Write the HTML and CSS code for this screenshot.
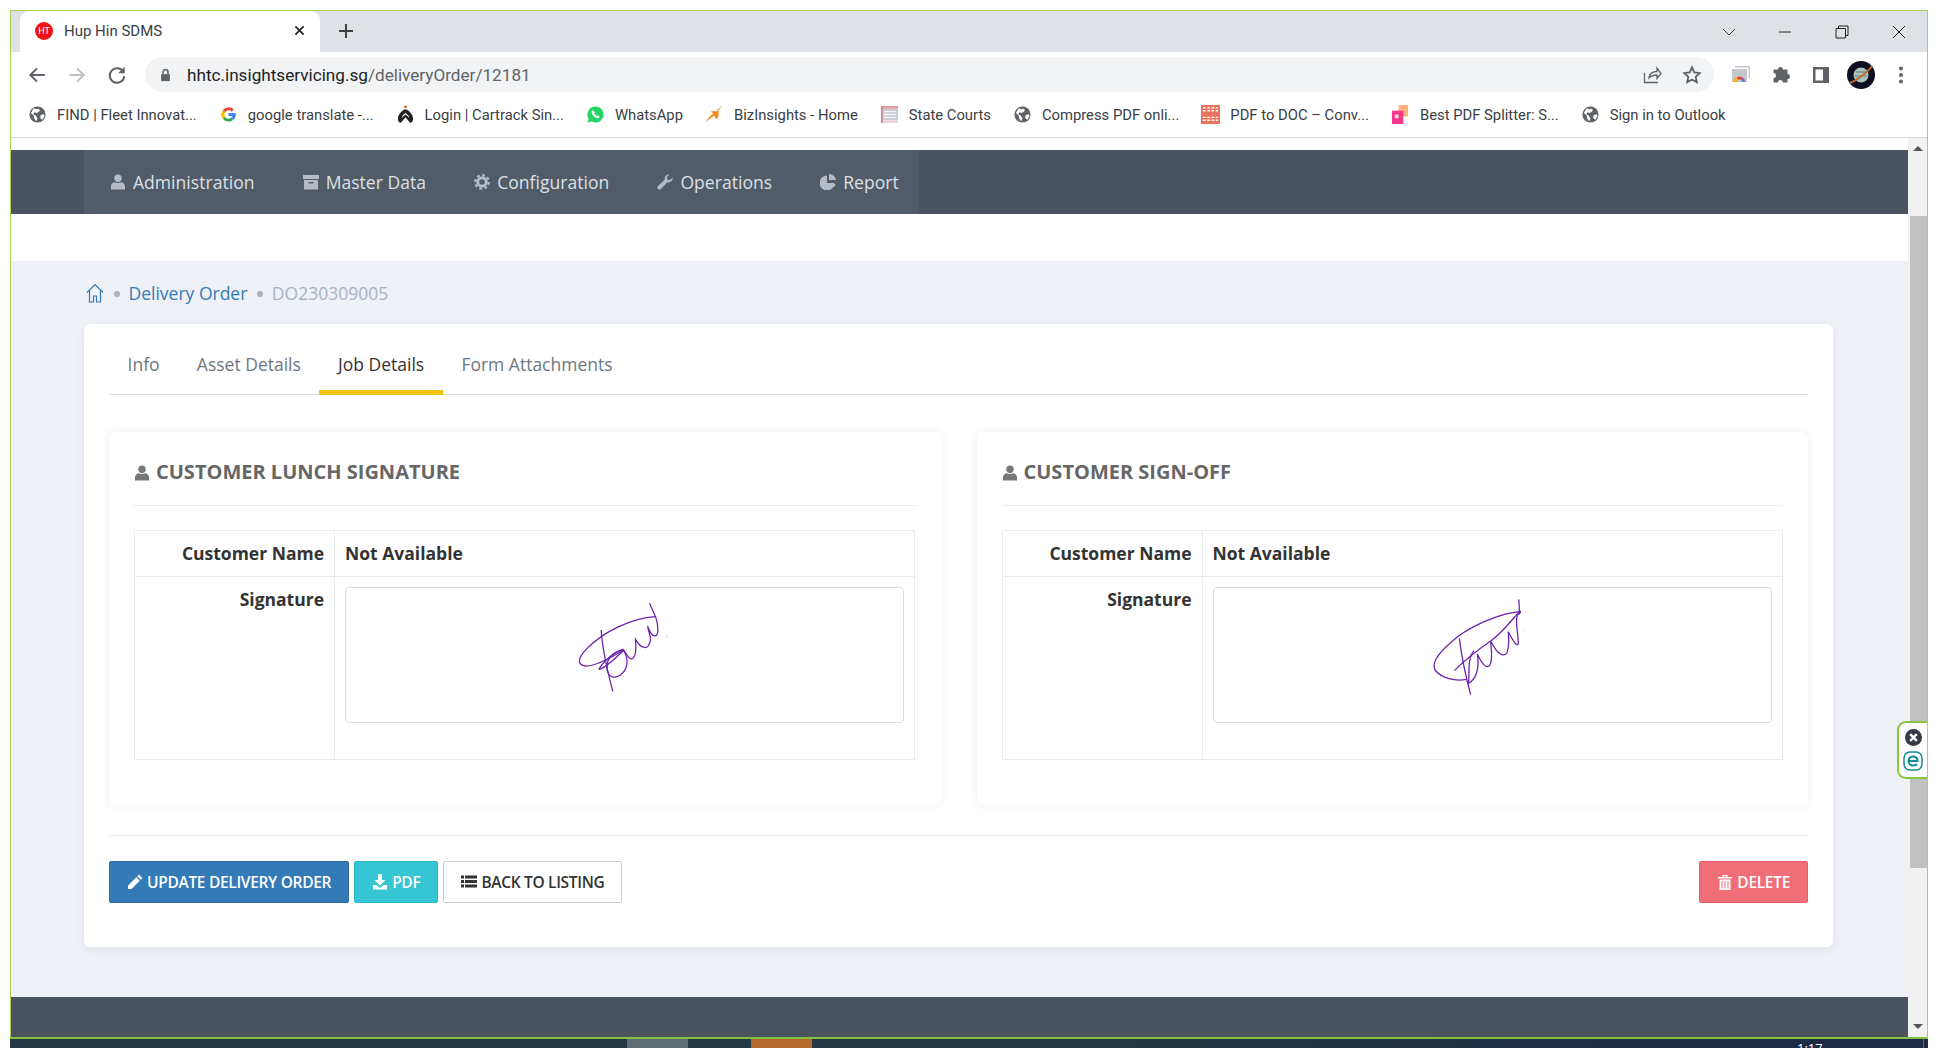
FILE: index.html
```html
<!DOCTYPE html>
<html lang="en">
<head>
    <meta charset="UTF-8">
    <meta name="viewport" content="width=device-width, initial-scale=1.0">
    <title>Hup Hin SDMS</title>
    <link rel="stylesheet" href="styles.css">
</head>
<body>
    <div class="window">
        <div class="tabstrip">
            <div class="tab">
                <span class="favicon">HT</span>
                <span class="tab-title">Hup Hin SDMS</span>
                <svg class="tab-close" viewBox="0 0 12 12"><path d="M1.500 1.500l9 9M10.500 1.500l-9 9"/></svg>
            </div>
            <svg class="new-tab" viewBox="0 0 14 14"><path d="M7 0v14M0 7h14"/></svg>
            <div class="strip-right">
                <svg class="win-chevron" viewBox="0 0 14 8"><path d="M1 1l6 6 6-6"/></svg>
                <span class="win-btn"><svg viewBox="0 0 14 14"><path d="M1 7h12"/></svg></span>
                <span class="win-btn"><svg viewBox="0 0 14 14"><path d="M1 3.500h9.500v9.500h-9.500zM3.500 3.500v-2.500h9.500v9.500h-2.500"/></svg></span>
                <span class="win-btn"><svg viewBox="0 0 14 14"><path d="M1 1l12 12M13 1l-12 12"/></svg></span>
            </div>
        </div>

        <div class="toolbar">
            <span class="tool"><svg viewBox="0 0 18 18"><path class="line" d="M16 9H3M9 3L3 9l6 6"/></svg></span>
            <span class="tool tool-off"><svg viewBox="0 0 18 18"><path class="line" d="M2 9h13M9 3l6 6-6 6"/></svg></span>
            <span class="tool"><svg viewBox="0 0 18 18"><path class="line" d="M14.500 6A6.500 6.500 0 1 0 15.500 10"/><path class="solid" d="M16 1.500v6h-6z"/></svg></span>
            <div class="omnibox">
                <svg class="lock" viewBox="0 0 12 16"><path class="solid" d="M1 7h10v8H1z"/><path class="line" d="M3.200 7V4.500a2.800 2.800 0 0 1 5.600 0V7"/></svg>
                <span class="url">hhtc.insightservicing.sg<span class="url-path">/deliveryOrder/12181</span></span>
                <span class="tool"><svg viewBox="0 0 20 20"><path class="thin" d="M2.500 8v9.500h13.500M7 13c.5-4 3.500-6.500 8-6.500V3l4 5.500-4 5V10c-3.500 0-6 1-8 3z"/></svg></span>
                <span class="tool"><svg viewBox="0 0 20 20"><path class="line" d="M10 2.500l2.300 5 5.400.6-4 3.700 1.100 5.400-4.800-2.700-4.800 2.700 1.100-5.400-4-3.700 5.400-.6z"/></svg></span>
            </div>
            <div class="tools-right">
                <span class="tool"><svg viewBox="0 0 20 20"><path class="grey-fill" d="M4 1h15v12h-1.500V2.500H4zM1 4h15v13H1z"/><path d="M3 17a5.500 5.500 0 0 1 11 0h-3a2.500 2.500 0 0 0-5 0z" fill="#ea4335"/><path d="M3 17a5.500 5.500 0 0 1 3-4.900l1.200 2.700A2.500 2.500 0 0 0 6 17z" fill="#fbbc05"/><path d="M11.500 12.600A5.500 5.500 0 0 1 14 17h-3z" fill="#4285f4"/></svg></span>
                <span class="tool"><svg viewBox="0 0 20 20"><path class="solid" d="M2 6h4.500a2.500 2.500 0 0 1 5 0H16v4.500a2.500 2.500 0 0 1 0 5V19h-4.500a2.500 2.500 0 0 0-5 0H2v-4.500a2.500 2.500 0 0 0 0-5z" transform="translate(0.500 -1.500)"/></svg></span>
                <span class="tool"><svg viewBox="0 0 20 20"><path class="solid" fill-rule="evenodd" d="M2 2h16v16H2zM4.500 4.500v11h7.500v-11z"/></svg></span>
                <span class="tool"><svg class="avatar" viewBox="0 0 28 28"><circle cx="14" cy="14" r="14" fill="#0e0e22"/><circle cx="14" cy="14" r="7.500" fill="#a9c3b8"/><path d="M9 11h10M8 15h12" stroke="#5f7d84"/><path d="M3 22C9 20 21 11 25 5" stroke="#c5682f" stroke-width="2" fill="none"/></svg></span>
                <span class="tool"><svg viewBox="0 0 20 20"><circle class="solid" cx="10" cy="3.500" r="2"/><circle class="solid" cx="10" cy="10" r="2"/><circle class="solid" cx="10" cy="16.500" r="2"/></svg></span>
            </div>
        </div>

        <div class="bookmarks">
            <a class="bookmark"><svg viewBox="0 0 20 20"><use href="#globe"/></svg>FIND | Fleet Innovat...</a>
            <a class="bookmark"><svg viewBox="0 0 20 20"><path d="M15.500 4.500A7.500 7.500 0 0 0 4 5.500l2.500 2A4.500 4.500 0 0 1 13.500 7z" fill="#ea4335"/><path d="M4 5.500a7.500 7.500 0 0 0 0 9l2.500-2a4.500 4.500 0 0 1 0-5z" fill="#fbbc05"/><path d="M4 14.500a7.500 7.500 0 0 0 11 1l-2.300-2a4.500 4.500 0 0 1-6.200-1z" fill="#34a853"/><path d="M15.500 15.500A7.500 7.500 0 0 0 17.500 8.500H10v3h4.300a4 4 0 0 1-1.600 2z" fill="#4285f4"/></svg>google translate -...</a>
            <a class="bookmark"><svg viewBox="0 0 20 20"><circle cx="10" cy="2" r="1.500" fill="#e8632b"/><path d="M10 4.500c-4 1-8 6-8 10 0 3 2 4.500 3.500 4L10 13l4.500 5.500c1.500.5 3.500-1 3.500-4 0-4-4-9-8-10z" fill="#222"/><path d="M10 8.500c-2 1-3.500 3-4 5l4-3.500 4 3.500c-.5-2-2-4-4-5z" fill="#fff"/></svg>Login | Cartrack Sin...</a>
            <a class="bookmark"><svg viewBox="0 0 20 20"><path d="M10 1.500a8.500 8.500 0 0 0-7.300 12.800L1.500 18.500l4.300-1.100A8.500 8.500 0 1 0 10 1.500z" fill="#25d366"/><path d="M7 5.500c-2 1.500-1 4.500 1.500 6.500s5 2.500 6 .5l-2-1.800-1.300.8c-1-.5-2-1.500-2.500-2.700l.8-1.200z" fill="#fff"/></svg>WhatsApp</a>
            <a class="bookmark"><svg viewBox="0 0 20 20"><path d="M18 1c-3 2-5 4-6 6-1-1-3-1-6 0l3 2c-3 2-6 5-8 9 3-3 6-5 9-7 0 2 1 3 3 4 1-3 2-6 1-9 1-2 3-3 4-5z" fill="#f28a1e"/></svg>BizInsights - Home</a>
            <a class="bookmark"><svg viewBox="0 0 20 20"><path d="M2 1h17v3H2z" fill="#e39aa5"/><path d="M2 4h17v12H2z" fill="#c9ced6"/><path d="M4 7h13M4 10h13M4 13h13" stroke="#fff"/><path d="M1 16h18v3H1z" fill="#e8d6da"/><path d="M1 1h2v18H1z" fill="#d98a97"/></svg>State Courts</a>
            <a class="bookmark"><svg viewBox="0 0 20 20"><use href="#globe"/></svg>Compress PDF onli...</a>
            <a class="bookmark"><svg viewBox="0 0 20 20"><path d="M0 0h20v20H0z" fill="#e8735f"/><path d="M2 3h16M2 6h16M2 13h16M2 16h16" stroke="#fff" stroke-width="1.500" stroke-dasharray="3 1.500"/></svg>PDF to DOC – Conv...</a>
            <a class="bookmark"><svg viewBox="0 0 20 20"><path d="M8 0h10v12H8z" fill="#ffb27a"/><path d="M1 6h12v14H1z" fill="#f5388c"/><path d="M4 10h4v4H4z" fill="#ffd0e2"/></svg>Best PDF Splitter: S...</a>
            <a class="bookmark"><svg viewBox="0 0 20 20"><use href="#globe"/></svg>Sign in to Outlook</a>
        </div>

        <div class="viewport">
            <div class="page">
                <nav class="topnav">
                    <div class="topnav-inner">
                        <a class="nav-item"><svg viewBox="0 0 16 16"><use href="#user"/></svg>Administration</a>
                        <a class="nav-item"><svg viewBox="0 0 16 16"><path fill-rule="evenodd" d="M0 1h16v4H0zM1 6h14v9.500H1zM5.500 8v1.500h5V8z"/></svg>Master Data</a>
                        <a class="nav-item"><svg viewBox="0 0 16 16"><circle cx="8" cy="8" r="4.300" fill="none" stroke="currentColor" stroke-width="3"/><circle cx="8" cy="8" r="6.800" fill="none" stroke="currentColor" stroke-width="2.200" stroke-dasharray="2.700 2.640"/></svg>Configuration</a>
                        <a class="nav-item"><svg viewBox="0 0 16 16"><path d="M15.500 3.500c.5 3-2 5.500-5.200 4.800L4 15a2 2 0 0 1-3-3l6.700-6.300C7 2.500 9.500 0 12.500.5L9.800 3.300l.6 2.300 2.300.6z"/></svg>Operations</a>
                        <a class="nav-item"><svg viewBox="0 0 16 16"><path d="M7 1.500V9h7.500A7.500 7.500 0 1 1 7 1.500z"/><path d="M9 0a7 7 0 0 1 7 6H9z"/><path d="M10 10h5.500a7 7 0 0 1-2 3.500z"/></svg>Report</a>
                    </div>
                </nav>
                <div class="nav-gap"></div>

                <main class="content">
                    <div class="breadcrumb">
                        <svg class="home" viewBox="0 0 18 20"><path d="M1 9.500L9 1.500l8 8M3.500 7.500V19h4v-6h3v6h4V7.500"/></svg>
                        <i class="crumb-dot"></i>
                        <a class="crumb-link">Delivery Order</a>
                        <i class="crumb-dot"></i>
                        <span class="crumb-now">DO230309005</span>
                    </div>

                    <section class="card">
                        <div class="tabs">
                            <a class="tab-link">Info</a>
                            <a class="tab-link">Asset Details</a>
                            <a class="tab-link active">Job Details</a>
                            <a class="tab-link">Form Attachments</a>
                        </div>

                        <div class="panels">
                            <div class="panel">
                                <h3 class="panel-title"><svg viewBox="0 0 16 16"><use href="#user"/></svg>CUSTOMER LUNCH SIGNATURE</h3>
                                <table class="sign-table">
                                    <tr>
                                        <th>Customer Name</th>
                                        <td>Not Available</td>
                                    </tr>
                                    <tr class="sign-row">
                                        <th>Signature</th>
                                        <td>
                                            <div class="sign-box">
                                                <svg viewBox="13.500 51 480 408">
                                                    <path d="M345 140C270 145 190 185 140 235C110 265 110 285 135 288C160 290 200 270 250 240"/>
                                                    <path d="M175 298C190 270 225 245 248 238C262 260 270 275 280 262C290 245 285 225 285 208C300 235 325 245 330 210C330 190 320 175 322 170C335 205 352 205 352 180C353 165 348 150 345 140L327 100"/>
                                                    <path d="M182 180C185 230 200 300 217 364"/>
                                                    <path d="M248 240C215 245 195 270 200 300C205 325 225 325 240 315C260 300 268 270 248 240"/>
                                                    <path d="M175 298C195 295 225 265 250 240"/>
                                                    <path class="dot" d="M380 197v6M339 98h2"/>
                                                </svg>
                                            </div>
                                        </td>
                                    </tr>
                                </table>
                            </div>
                            <div class="panel">
                                <h3 class="panel-title"><svg viewBox="0 0 16 16"><use href="#user"/></svg>CUSTOMER SIGN-OFF</h3>
                                <table class="sign-table">
                                    <tr>
                                        <th>Customer Name</th>
                                        <td>Not Available</td>
                                    </tr>
                                    <tr class="sign-row">
                                        <th>Signature</th>
                                        <td>
                                            <div class="sign-box">
                                                <svg viewBox="36 21 480 408">
                                                    <path d="M358 95C300 100 200 140 150 190C110 225 95 250 105 270C125 295 165 305 200 298"/>
                                                    <path d="M163 272C190 245 240 205 272 183"/>
                                                    <path d="M272 183C305 160 335 120 358 95"/>
                                                    <path d="M178 175C185 230 200 300 212 344"/>
                                                    <path d="M222 212C200 235 210 290 205 310C225 300 240 270 232 222C245 250 260 270 270 255C280 235 272 200 272 183C285 210 305 235 320 220C330 200 325 170 325 155C335 175 352 205 355 190C355 165 345 125 352 105C365 100 362 90 358 95C358 85 358 70 356 58"/>
                                                    <path class="dot" d="M368 151h3"/>
                                                </svg>
                                            </div>
                                        </td>
                                    </tr>
                                </table>
                            </div>
                        </div>

                        <div class="actions">
                            <a class="btn btn-primary"><svg viewBox="0 0 16 16"><path d="M12 .5l3.500 3.500-1.800 1.800-3.500-3.500zM9.300 3.200l3.500 3.500-8.300 8.300H1v-3.500z"/></svg>UPDATE DELIVERY ORDER</a>
                            <a class="btn btn-info"><svg viewBox="0 0 16 16"><path d="M6 0h4v6h3.500L8 11.500 2.500 6H6z"/><path d="M1 11h3.500L8 14l3.500-3H15v4.500H1z"/></svg>PDF</a>
                            <a class="btn btn-plain"><svg viewBox="0 0 16 16"><path d="M0 1.500h3v3H0zM4 1.500h12v3H4zM0 6h3v3H0zM4 6h12v3H4zM0 10.500h3v3H0zM4 10.500h12v3H4z"/></svg>BACK TO LISTING</a>
                            <a class="btn btn-danger"><svg viewBox="0 0 16 16"><path fill-rule="evenodd" d="M1 3h14v1.500H1zM5.500 3V1h5v2h-1.300V2.200H6.800V3zM2.500 5.500h11V16h-11zM4.500 7v7.500h1V7zM7.500 7v7.500h1V7zM10.500 7v7.500h1V7z"/></svg>DELETE</a>
                        </div>
                    </section>
                </main>

                <footer class="page-footer"></footer>
            </div>

            <div class="scrollbar">
                <i class="arrow-up"></i>
                <div class="thumb"></div>
                <i class="arrow-down"></i>
            </div>

            <div class="eset-tab">
                <svg viewBox="0 0 18 18"><circle cx="9" cy="9" r="9" fill="#343a46"/><path d="M5.500 5.500l7 7M12.500 5.500l-7 7" stroke="#fff" stroke-width="2.500"/></svg>
                <svg viewBox="0 0 20 20"><rect x="1" y="1" width="18" height="18" rx="6" fill="none" stroke="#0d8a95" stroke-width="1.500"/><path d="M5.500 10h9c0-3-2-4.500-4.500-4.500S5.500 7.500 5.500 10s2 4.500 4.500 4.500c2 0 3.500-.6 4-1.500" fill="none" stroke="#0d8a95" stroke-width="2"/></svg>
            </div>
        </div>
    </div>

    <div class="taskbar">
        <span class="task task-grey"></span>
        <span class="task task-orange"></span>
        <span class="clock">1:17</span>
        <span class="task-edge"></span>
    </div>

    <svg class="defs" width="0" height="0">
        <symbol id="globe" viewBox="0 0 20 20">
            <circle cx="10" cy="10" r="8.500" fill="#5f6368"/>
            <path d="M6 3.500l3 1 2.500-.5 1 2-3 2.500-2.500-1-1.500 2 3 2 1.500 3-1.500 2.500-2-3-.5-3-3-2.500zM13 11l3.500-1.500 1 2-2.500 4-2-1.500z" fill="#fff"/>
        </symbol>
        <symbol id="user" viewBox="0 0 16 16">
            <circle cx="8" cy="4.200" r="3.700" fill="currentColor"/>
            <path d="M1 15.500v-3.200C1 10 3 8.300 4.800 8.300c.9.800 5.500.8 6.400 0C13 8.300 15 10 15 12.300v3.200z" fill="currentColor"/>
        </symbol>
    </svg>
</body>
</html>
```

FILE: styles.css
```css
* {
    box-sizing: border-box;
}
html, body {
    margin: 0;
    padding: 0;
    width: 1938px;
    height: 1048px;
    overflow: hidden;
    background: #fff;
}
body {
    display: flex;
    flex-direction: column;
    padding-top: 10px;
    font-family: "Open Sans", Arial, sans-serif;
    color: #333;
}
svg {
    display: block;
    flex: none;
}
.defs {
    position: absolute;
}

/* browser chrome */
.window {
    width: 1918px;
    height: 1029px;
    margin-left: 10px;
    display: flex;
    flex-direction: column;
    border: 1px solid #a6d45f;
    border-bottom: 2px solid #84c13f;
}
.tabstrip {
    height: 41px;
    background: #dee1e6;
    display: flex;
    align-items: stretch;
    padding-left: 9px;
}
.tab {
    width: 300px;
    background: #fff;
    border-radius: 9px 9px 0 0;
    display: flex;
    align-items: center;
    padding: 0 15px 2px;
    font-family: Roboto, sans-serif;
    font-size: 15px;
    color: #3c4043;
}
.favicon {
    width: 18px;
    height: 18px;
    border-radius: 50%;
    background: #f01414;
    color: #fff;
    font-size: 9px;
    line-height: 18px;
    text-align: center;
    margin-right: 11px;
}
.tab-title {
    flex: 1;
}
.tab-close {
    width: 11px;
    height: 11px;
    fill: none;
    stroke: #26282b;
    stroke-width: 2;
}
.new-tab {
    width: 14px;
    height: 14px;
    margin: 13px 0 0 19px;
    fill: none;
    stroke: #3c4043;
    stroke-width: 2;
}
.strip-right {
    margin-left: auto;
    display: flex;
    align-items: center;
}
.win-chevron {
    width: 14px;
    height: 8px;
    margin-right: 20px;
    fill: none;
    stroke: #3c4043;
}
.win-btn {
    width: 57px;
    display: flex;
    justify-content: center;
}
.win-btn svg {
    width: 14px;
    height: 14px;
    fill: none;
    stroke: #222;
    stroke-width: 1;
}
.toolbar {
    height: 40px;
    padding: 5px 6px 0;
    background: #fff;
    display: flex;
    align-items: flex-start;
}
.tool {
    width: 40px;
    height: 35px;
    display: flex;
    align-items: center;
    justify-content: center;
    flex: none;
}
.tool svg {
    width: 20px;
    height: 20px;
}
.tool svg.avatar {
    width: 28px;
    height: 28px;
}
.tool-off {
    opacity: 0.4;
}
.line {
    fill: none;
    stroke: #5f6368;
    stroke-width: 1.800;
}
.thin {
    fill: none;
    stroke: #5f6368;
    stroke-width: 1.300;
}
.solid {
    fill: #5f6368;
}
.grey-fill {
    fill: #c4c7cc;
}
.omnibox {
    flex: none;
    width: 1569px;
    height: 35px;
    margin: 0 7px 0 8px;
    padding: 0 2px 0 15px;
    background: #f1f3f4;
    border-radius: 18px;
    display: flex;
    align-items: center;
}
.lock {
    width: 11px;
    height: 14px;
    margin-right: 16px;
}
.url {
    flex: 1;
    font-family: Roboto, sans-serif;
    font-size: 17.150px;
    color: #202124;
}
.url-path {
    color: #5f6368;
}
.tools-right {
    display: flex;
}
.bookmarks {
    height: 46px;
    padding-left: 17px;
    background: #fff;
    border-bottom: 1px solid #d9d9d9;
    display: flex;
    align-items: center;
    gap: 22px;
    font-family: Roboto, sans-serif;
    font-size: 14.800px;
    color: #3c4043;
}
.bookmark {
    display: flex;
    align-items: center;
    gap: 10px;
    white-space: nowrap;
}
.bookmark svg {
    width: 19px;
    height: 19px;
}

/* page */
.viewport {
    flex: 1;
    min-height: 0;
    display: flex;
    position: relative;
}
.page {
    flex: 1;
    min-width: 0;
    display: flex;
    flex-direction: column;
    padding-top: 12px;
    background: #fff;
}
.topnav {
    height: 64px;
    padding-left: 73px;
    background: #4a535e;
}
.topnav-inner {
    width: 835px;
    height: 64px;
    background: #515c68;
    display: flex;
    padding-left: 2px;
}
.nav-item {
    display: flex;
    align-items: center;
    padding: 0 24px;
    gap: 7px;
    font-size: 17.500px;
    letter-spacing: 0.050px;
    color: #dde0e5;
    white-space: nowrap;
}
.nav-item svg {
    width: 16px;
    height: 16px;
    fill: #b6bcc6;
    color: #b6bcc6;
}
.nav-gap {
    height: 47px;
}
.content {
    flex: 1;
    background: #eef1f6;
    padding: 16px 75px 0 73px;
}
.breadcrumb {
    height: 31px;
    margin-bottom: 16px;
    display: flex;
    align-items: center;
    font-size: 17.500px;
    padding-left: 2px;
}
.home {
    width: 18px;
    height: 20px;
    fill: none;
    stroke: #337ab7;
    stroke-width: 1.200;
}
.crumb-dot {
    width: 6px;
    height: 6px;
    border-radius: 50%;
    background: #a9b3bf;
    margin: 3px 9px 0 9.500px;
}
.crumb-link {
    color: #337ab7;
}
.crumb-now {
    color: #a9b3bf;
}
.card {
    height: 623px;
    background: #fff;
    border-radius: 6px;
    box-shadow: 0 3px 8px rgba(60, 80, 120, 0.08);
    padding: 15px 25px 0;
}
.tabs {
    height: 56px;
    display: flex;
    border-bottom: 1px solid #dde3ea;
}
.tab-link {
    height: 56px;
    padding: 0 18.600px;
    font-size: 17.500px;
    line-height: 50px;
    color: #6e7780;
    border-bottom: 5px solid transparent;
}
.tab-link.active {
    color: #333;
    border-bottom-color: #f1c40f;
}
.panels {
    margin-top: 37px;
    display: flex;
    gap: 36px;
}
.panel {
    flex: 1;
    height: 373px;
    padding: 25px 25px 0;
    border-radius: 6px;
    box-shadow: 0 0 8px rgba(60, 80, 120, 0.09);
}
.panel-title {
    height: 49px;
    margin: 0 0 24px;
    border-bottom: 1px solid #e9edf2;
    display: flex;
    align-items: flex-start;
    gap: 6px;
    font-size: 20px;
    font-weight: 700;
    line-height: 30px;
    color: #666;
}
.panel-title svg {
    width: 16px;
    height: 16px;
    margin-top: 8px;
    color: #777;
}
.sign-table {
    width: 781px;
    border-collapse: collapse;
    font-size: 17.500px;
    font-weight: 700;
}
.sign-table th, .sign-table td {
    border: 1px solid #e7ecf1;
    padding: 10px;
    vertical-align: top;
}
.sign-table th {
    width: 200px;
    text-align: right;
    font-weight: 700;
}
.sign-table td {
    text-align: left;
}
.sign-table tr {
    height: 46px;
}
.sign-table tr.sign-row {
    height: 183px;
}
.sign-box {
    height: 136px;
    border: 1px solid #dcdcdc;
    border-radius: 4px;
    display: flex;
    justify-content: center;
}
.sign-box svg {
    width: 160px;
    height: 136px;
    margin-top: -1px;
    fill: none;
    stroke: #6c21ad;
    stroke-width: 3.800;
}
.sign-box .dot {
    stroke: #b79ad6;
    stroke-width: 2;
}
.actions {
    margin-top: 30px;
    padding-top: 25px;
    border-top: 1px solid #e9edf2;
    display: flex;
    gap: 5px;
}
.btn {
    height: 42px;
    padding: 0 17px;
    display: flex;
    align-items: center;
    gap: 4px;
    border: 1px solid transparent;
    border-radius: 2px;
    font-size: 15.500px;
    font-weight: 600;
    letter-spacing: -0.310px;
    white-space: nowrap;
}
.btn svg {
    width: 16px;
    height: 16px;
    fill: currentColor;
}
.btn-primary {
    background: #337ab7;
    border-color: #2e6da4;
    color: #fff;
}
.btn-info {
    background: #36c6d3;
    border-color: #2bb8c4;
    color: #fff;
}
.btn-plain {
    background: #fff;
    border-color: #ccc;
    color: #333;
}
.btn-danger {
    margin-left: auto;
    background: #ef6e78;
    border-color: #e85a66;
    color: #fff;
}
.page-footer {
    height: 40px;
    background: #4a535e;
}
.scrollbar {
    width: 19px;
    background: #f1f1f1;
    display: flex;
    flex-direction: column;
    align-items: flex-end;
    position: relative;
}
.arrow-up {
    width: 0;
    height: 0;
    margin: 8px 4px 0 0;
    border: 5px solid transparent;
    border-top: 0;
    border-bottom: 5px solid #555;
}
.thumb {
    width: 17px;
    height: 652px;
    margin-top: 65px;
    background: #c1c1c1;
}
.arrow-down {
    width: 0;
    height: 0;
    margin: auto 4px 8px 0;
    border: 5px solid transparent;
    border-bottom: 0;
    border-top: 5px solid #555;
}
.eset-tab {
    position: absolute;
    right: 0;
    top: 583px;
    width: 30px;
    height: 58px;
    background: #fff;
    border: 2px solid #8ac540;
    border-right: 0;
    border-radius: 9px 0 0 9px;
    display: flex;
    flex-direction: column;
    align-items: center;
    gap: 5px;
    padding-top: 6px;
}
.eset-tab svg {
    width: 17px;
    height: 17px;
}
.eset-tab svg + svg {
    width: 20px;
    height: 20px;
}

/* taskbar sliver */
.taskbar {
    width: 1918px;
    height: 9px;
    margin-left: 10px;
    background: linear-gradient(90deg, #233a44, #233a44 50%, #1c2a45);
    display: flex;
    overflow: hidden;
}
.task {
    height: 9px;
    width: 61px;
}
.task-grey {
    margin-left: 617px;
    background: #606d73;
}
.task-orange {
    margin-left: 63px;
    background: #b1692d;
}
.clock {
    margin-left: 985px;
    margin-top: 1px;
    font-size: 13px;
    line-height: 16px;
    color: #fff;
}
.task-edge {
    width: 1px;
    margin-left: auto;
    margin-right: 4px;
    background: #5a6678;
}
```
